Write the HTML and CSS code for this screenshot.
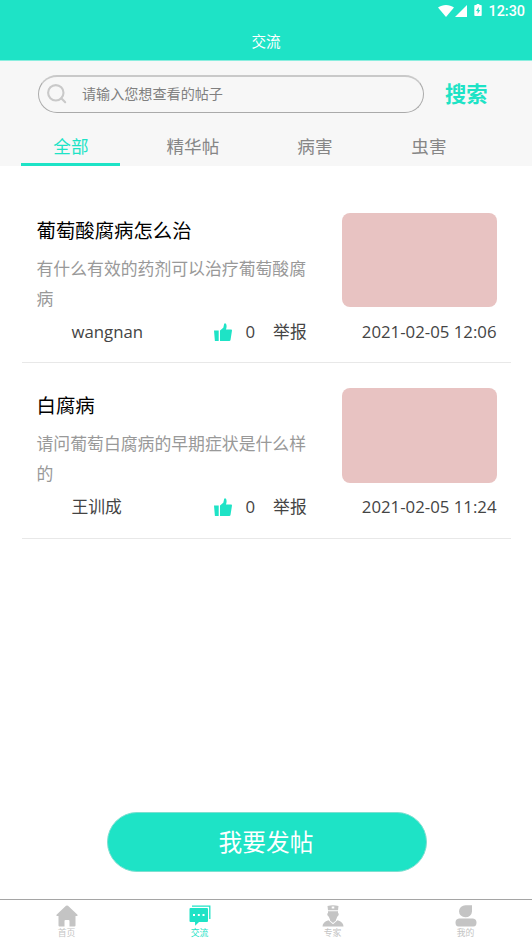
FILE: index.html
```html
<!DOCTYPE html>
<html lang="zh-CN">
<head>
<meta charset="utf-8">
<title>交流</title>
<link rel="stylesheet" href="styles.css">
</head>
<body>
<div class="app">
  <header class="header">
    <div class="status">
      <svg class="wifi" viewBox="0 0 16 12"><path d="M0 2.600C4.600-.8 11.400-.8 16 2.600L8 12Z"/></svg>
      <svg class="signal" viewBox="0 0 12 12"><path d="M12 0V12H0Z"/></svg>
      <svg class="battery" viewBox="0 0 8 13"><path fill-rule="evenodd" d="M2.500 0h3v1.200H7.200q.8 0 .8.800V12.200q0 .8-.8.8H.8Q0 13 0 12.200V2q0-.8.8-.8H2.500ZM4.900 3.200 1.800 7.600h1.800v3.300L6.400 6.400H4.700Z"/></svg>
      <span class="clock">12:30</span>
    </div>
    <h1 class="title">交流</h1>
  </header>

  <section class="tools">
    <div class="search">
      <div class="field">
        <svg class="lens" viewBox="0 0 20 20"><circle cx="8.800" cy="8.800" r="7.700"/><path d="M14.300 14.300 18.200 18.200"/></svg>
        <span>请输入您想查看的帖子</span>
      </div>
      <span class="submit">搜索</span>
    </div>
    <nav class="tabs">
      <a class="tab active">全部</a>
      <a class="tab">精华帖</a>
      <a class="tab">病害</a>
      <a class="tab">虫害</a>
    </nav>
  </section>

  <main class="posts">
    <article class="post">
      <div class="summary">
        <div class="copy">
          <h2>葡萄酸腐病怎么治</h2>
          <p>有什么有效的药剂可以治疗葡萄酸腐病</p>
        </div>
        <div class="photo"></div>
      </div>
      <div class="meta">
        <span class="author"><span class="name">wangnan</span></span>
        <svg class="like" viewBox="0 0 18 18"><path d="M0 7.500h4.700V18H.9ZM6 7.500 9.300 4.800 10.200.7Q11-.3 12 .8 13.200 3 12 6.500H17.200Q18 6.500 18 7.500L16.500 17Q16.300 18 15.300 18H6Z"/></svg>
        <span class="count">0</span>
        <span>举报</span>
        <time>2021-02-05 12:06</time>
      </div>
    </article>
    <article class="post">
      <div class="summary">
        <div class="copy">
          <h2>白腐病</h2>
          <p>请问葡萄白腐病的早期症状是什么样的</p>
        </div>
        <div class="photo"></div>
      </div>
      <div class="meta">
        <span class="author"><span class="name">王训成</span></span>
        <svg class="like" viewBox="0 0 18 18"><path d="M0 7.500h4.700V18H.9ZM6 7.500 9.300 4.800 10.200.7Q11-.3 12 .8 13.200 3 12 6.500H17.200Q18 6.500 18 7.500L16.500 17Q16.300 18 15.300 18H6Z"/></svg>
        <span class="count">0</span>
        <span>举报</span>
        <time>2021-02-05 11:24</time>
      </div>
    </article>
  </main>

  <button class="create">我要发帖</button>

  <nav class="bottom">
    <a class="item">
      <svg viewBox="0 0 22 22"><path d="M10 .8Q11 0 12 .8L21.500 9.800Q22 11 20.800 11H19.500V20.500Q19.500 21.500 18.500 21.500H13.500V16Q13.500 15 12.500 15H9.500Q8.500 15 8.500 16V21.500H3.500Q2.500 21.500 2.500 20.500V11H1Q0 11 .5 9.800Z"/></svg>
      首页
    </a>
    <a class="item current">
      <svg viewBox="0 0 22 22"><path d="M3 1.200H20.800V14" fill="none" stroke="currentColor" stroke-width="1.300"/><path fill-rule="evenodd" d="M1.500 3H18Q19 3 19 4V16Q19 17 18 17H10L6.200 20.800 6 17H1.500Q.5 17 .5 16V4Q.5 3 1.500 3ZM4 9v2h2V9ZM8.800 9v2h2V9ZM13.500 9v2h2V9Z"/></svg>
      交流
    </a>
    <a class="item">
      <svg viewBox="0 0 22 22"><path fill-rule="evenodd" d="M5.500 1Q11-.5 16.500 1L16 5.200H6ZM9.700 1.600v2h2.600V1.600Z"/><path d="M6 6.200H16V8.500H17Q16.500 11 15.300 11.500 14.500 14 14 14.500V15.500L11 18 8 15.500V14.500Q7.500 13.500 6.700 11.500 5.500 11 5 8.500H6ZM6.500 15.300 11 19.300 15.500 15.300Q21.500 17 21.500 21.500H.5Q.5 17 6.500 15.300Z"/></svg>
      专家
    </a>
    <a class="item">
      <svg viewBox="0 0 22 22"><path d="M17 .3V6.500A6.500 6 0 1 1 10.500 .3ZM4 13.500H18Q21.500 14 21.500 17.500 21.500 21.500 18.500 21.500H3.500Q.5 21.500 .5 17.500.5 14 4 13.500Z"/></svg>
      我的
    </a>
  </nav>
</div>
</body>
</html>
```

FILE: styles.css
```css
* { box-sizing: border-box; }
body {
  margin: 0;
  background: #fff;
  font-family: "Open Sans", "Noto Sans CJK SC", sans-serif;
  color: #444;
}
.app { height: 944px; display: flex; flex-direction: column; overflow: hidden; }

.header {
  height: 61px;
  flex: none;
  background: #1ee3c6;
  border-bottom: 1px solid #8beedf;
  color: #fff;
}
.status {
  height: 22px;
  display: flex;
  align-items: center;
  justify-content: flex-end;
  padding-right: 7px;
  fill: #fff;
}
.wifi { width: 16px; height: 12px; }
.signal { width: 12px; height: 12px; margin-left: 1px; }
.battery { width: 8px; height: 12px; margin: 0 6px 2px 7px; }
.clock { font: 500 14.400px/22px Roboto, sans-serif; padding-top: 1px; }
.title {
  margin: 4px 0 0;
  text-align: center;
  font-size: 14.600px;
  line-height: 30px;
  font-weight: 400;
}

.tools { height: 105px; flex: none; background: #f7f7f7; padding-top: 14px; }
.search { display: flex; align-items: center; padding-left: 38px; }
.field {
  width: 386px;
  height: 38px;
  border: 1px solid #aaa;
  border-top: 2px solid #c9c9c9;
  border-radius: 19px;
  display: flex;
  align-items: center;
  padding: 0 0 2px 8px;
  font-size: 14.100px;
  line-height: 20px;
  color: #808080;
}
.lens {
  width: 20px;
  height: 20px;
  margin-right: 15px;
  fill: none;
  stroke: #c9c9c9;
  stroke-width: 2.100;
  stroke-linecap: round;
}
.submit { margin-left: 21px; font-size: 21.300px; line-height: 30px; font-weight: 700; color: #1ee3c6; }
.tabs {
  display: grid;
  grid-template-columns: 99px 99px 99px 99px;
  column-gap: 23px;
  margin: 13px 0 0 21.400px;
}
.tab {
  height: 40px;
  text-align: center;
  font-size: 17.600px;
  line-height: 40px;
  color: #868686;
}
.tab:last-child { margin: 0 8px 0 -8px; }
.active { color: #1ee3c6; border-bottom: 3px solid #1ee3c6; }

.posts { padding: 22px 21px 0 22px; }
.post {
  height: 175px;
  padding: 24.500px 14.500px 0 14.500px;
  border-bottom: 1px solid #e8e8e8;
}
.post + .post { height: 176px; padding-top: 25px; }
.summary { display: flex; justify-content: space-between; height: 102px; }
.copy { width: 275px; }
h2 {
  margin: 4px 0 9px;
  font-size: 19.400px;
  line-height: 28px;
  font-weight: 400;
  color: #000;
}
p { margin: 0; font-size: 16.850px; line-height: 30.300px; color: #999; }
.photo {
  width: 154.500px;
  height: 94.500px;
  border-radius: 8px;
  background: #e8c3c2;
}
.meta { display: flex; align-items: center; height: 34px; font-size: 16.800px; line-height: 24px; }
.author { width: 177px; padding-left: 35px; }
.like { width: 18px; height: 18px; fill: #1ee3c6; }
.count { margin: 0 18px 0 14px; }
.meta time { margin-left: auto; }

.create {
  width: 320px;
  height: 60px;
  flex: none;
  margin: auto 105px 27px 107px;
  border: 1px solid #7edfd0;
  border-radius: 30px;
  background: #1ee3c6;
  color: #fff;
  font: 23.700px/36px "Noto Sans CJK SC", sans-serif;
  padding: 0 2px 2px 0;
}
.bottom {
  height: 45px;
  flex: none;
  border-top: 1px solid #a5a5a5;
  display: grid;
  grid-template-columns: repeat(4, 1fr);
}
.item {
  display: flex;
  flex-direction: column;
  align-items: center;
  padding-top: 5px;
  font-size: 8.800px;
  line-height: 13px;
  color: #c4c4c4;
}
.item svg { width: 22px; height: 22px; fill: currentColor; }
.current { color: #1ee3c6; }
```
